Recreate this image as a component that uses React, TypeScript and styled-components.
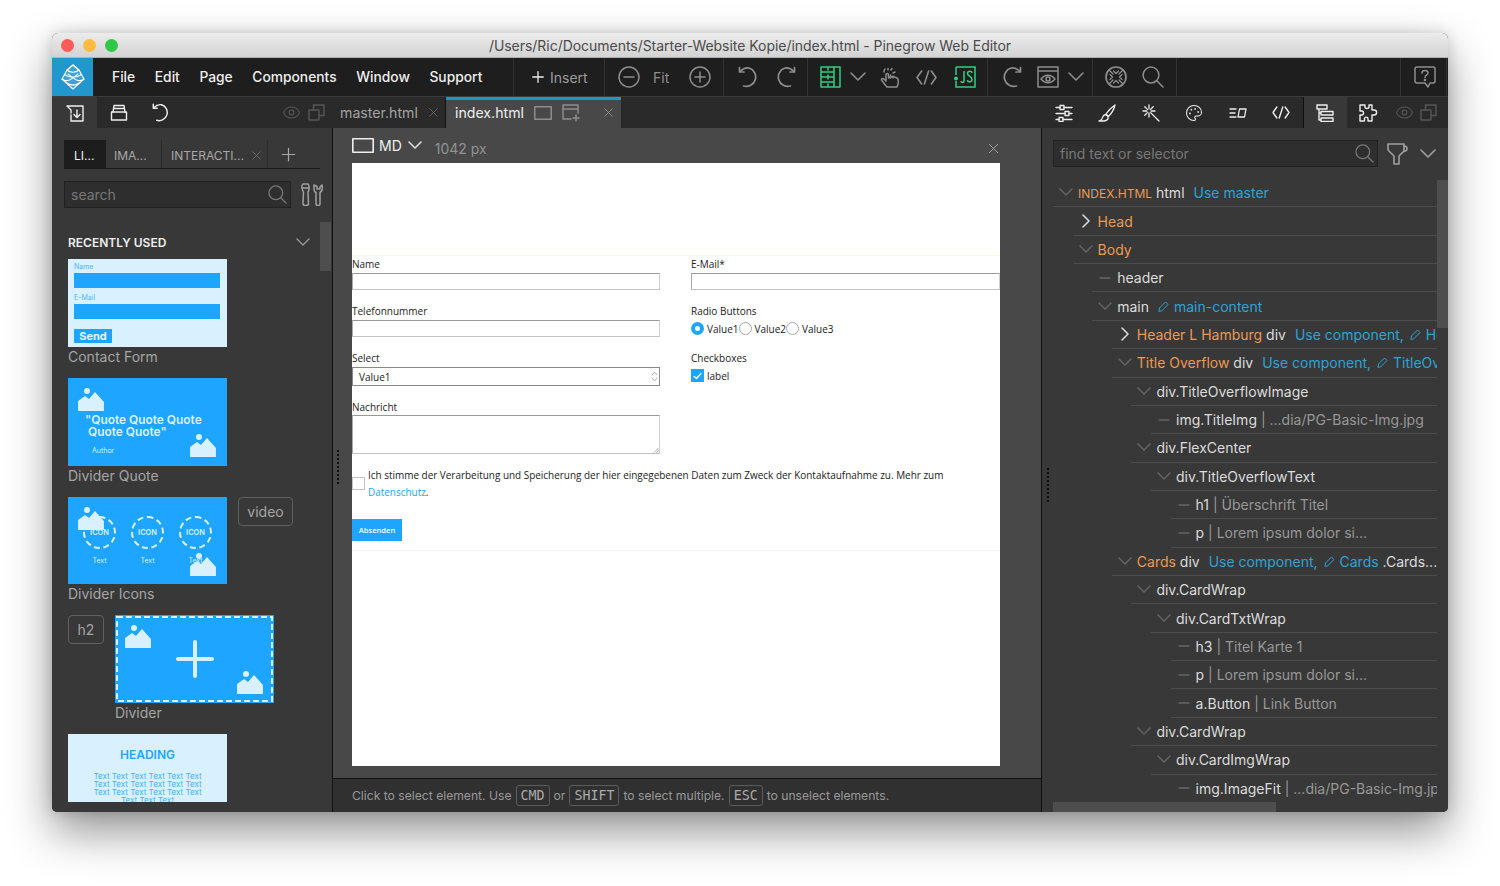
import * as React from 'react';
import styled, { createGlobalStyle } from 'styled-components';
import { Eye, Palette, Plus, X } from 'lucide-react';

const GlobalStyle = createGlobalStyle`
  html, body {
    margin: 0;
    height: 886px;
    overflow: hidden;
    background: #fff;
    font-family: Inter, "Liberation Sans", sans-serif;
  }
  * { box-sizing: border-box; }
`;

const Page = styled.div`
  width: 1500px;
  height: 886px;
  padding: 33px 52px 74px;
`;

const Window = styled.div`
  width: 1396px;
  height: 779px;
  border-radius: 6px 6px 5px 5px;
  overflow: hidden;
  display: flex;
  flex-direction: column;
  background: #383838;
  box-shadow: 0 20px 45px rgba(0, 0, 0, 0.42), 0 0 14px rgba(0, 0, 0, 0.16);
`;

const TitleBar = styled.div`
  height: 25px;
  flex: none;
  position: relative;
  display: flex;
  align-items: center;
  justify-content: center;
  padding-top: 1px;
  background: linear-gradient(#ececec, #d3d3d3);
  border-bottom: 1px solid #b2b2b2;
  color: #4b4b4b;
  font-size: 14px;
  letter-spacing: -0.035px;
`;

const Lights = styled.div`
  position: absolute;
  left: 9px;
  top: 6px;
  display: flex;
  gap: 9px;
`;

const Light = styled.span<{ $color: string }>`
  width: 13px;
  height: 13px;
  border-radius: 50%;
  background: ${(p) => p.$color};
`;

const Toolbar = styled.div`
  height: 39px;
  flex: none;
  display: flex;
  background: #1e1e1e;
  border-bottom: 1px solid #3c3c3c;
`;

const LogoBox = styled.div`
  width: 41px;
  display: flex;
  align-items: center;
  justify-content: center;
  background: #2197cd;
`;

const Menu = styled.div`
  width: 421px;
  padding-left: 19px;
  display: flex;
  align-items: center;
  gap: 19.6px;
  color: #eee;
  font-size: 13.8px;
  font-weight: 500;
  border-right: 1px solid #333;
`;

const ToolGroup = styled.div<{ $width: number; $pad?: number }>`
  width: ${(p) => p.$width}px;
  flex: none;
  display: flex;
  align-items: center;
  padding-left: ${(p) => p.$pad || 0}px;
  border-right: 1px solid #333;
  color: #8d8d8d;
  font-size: 14px;
`;

const InsertLabel = styled.span`
  margin-left: 3px;
  color: #9c9c9c;
`;

const FitLabel = styled.span`
  margin: 0 20px 0 13px;
`;

const TabBar = styled.div`
  height: 31px;
  flex: none;
  display: flex;
  background: #2a2a2a;
`;

const TabIconBox = styled.div<{ $width: number; $active?: boolean }>`
  width: ${(p) => p.$width}px;
  flex: none;
  display: flex;
  align-items: center;
  justify-content: center;
  background: ${(p) => (p.$active ? '#383838' : 'transparent')};
`;

const FileTabs = styled.div`
  flex: 1;
  display: flex;
  align-items: center;
`;

const GhostIcons = styled.div`
  width: 45px;
  flex: none;
  margin-left: 99px;
  display: flex;
  align-items: center;
  gap: 7px;
`;

const FileTab = styled.div<{ $active?: boolean }>`
  height: 31px;
  display: flex;
  align-items: center;
  font-size: 14.15px;
  color: ${(p) => (p.$active ? '#eee' : '#a3a3a3')};
  background: ${(p) => (p.$active ? '#484848' : 'transparent')};
  border-top: ${(p) => (p.$active ? '3px solid #1c96cf' : '0')};
  padding: ${(p) => (p.$active ? '0 0 3px 9px' : '0 0 0 13px')};
  width: ${(p) => (p.$active ? '175px' : '119px')};
  border-right: ${(p) => (p.$active ? '0' : '1px solid #111')};
`;

const Spacer = styled.span<{ $width: number }>`
  width: ${(p) => p.$width}px;
  flex: none;
`;

const RightTabs = styled.div`
  display: flex;
`;

const RightTabIcon = styled(TabIconBox)<{ $split?: boolean }>`
  width: 43.5px;
  border-left: ${(p) => (p.$split ? '1px solid #111' : '0')};
`;

const Body = styled.div`
  flex: 1;
  min-height: 0;
  display: flex;
`;

const LeftPanel = styled.div`
  width: 280px;
  flex: none;
  position: relative;
  display: flex;
  flex-direction: column;
  background: #383838;
  padding-top: 12px;
`;

const LibTabs = styled.div`
  height: 29px;
  margin: 0 12px;
  display: flex;
  align-items: stretch;
  border-bottom: 1px solid #1c1c1c;
  color: #a8a8a8;
  font-size: 12px;
`;

const LibTab = styled.div<{ $width: number; $active?: boolean; $pad?: number }>`
  width: ${(p) => p.$width}px;
  flex: none;
  display: flex;
  align-items: center;
  justify-content: space-between;
  padding: 3px 3px 0 ${(p) => p.$pad ?? 8}px;
  color: ${(p) => (p.$active ? '#eee' : '#a8a8a8')};
  background: ${(p) => (p.$active ? '#1d1d1d' : 'transparent')};
  border-right: ${(p) => (p.$active ? '0' : '1px solid #2b2b2b')};
`;

const AddTab = styled.div`
  width: 40px;
  display: flex;
  align-items: center;
  justify-content: center;
  color: #a8a8a8;
`;

const SearchRow = styled.div`
  margin: 12px 9px 0 12px;
  display: flex;
  align-items: center;
  gap: 9px;
`;

const SearchBox = styled.div<{ $width: number }>`
  width: ${(p) => p.$width}px;
  flex: none;
  height: 27px;
  display: flex;
  align-items: center;
  justify-content: space-between;
  padding: 0 3px 0 6px;
  background: #2e2e2e;
  border: 1px solid #222;
  color: #787878;
  font-size: 14px;
`;

const SectionHead = styled.div`
  margin: 26px 22px 0 16px;
  height: 16px;
  display: flex;
  align-items: center;
  justify-content: space-between;
  color: #eee;
  font-size: 12px;
  font-weight: 600;
`;

const ThumbList = styled.div`
  margin-top: 9px;
  padding-left: 16px;
  height: 543px;
  overflow: hidden;
`;

const ThumbBlock = styled.div`
  margin-bottom: 11px;
  display: flex;
  gap: 11px;
  align-items: flex-start;
`;

const ThumbCol = styled.div`
  width: 159px;
`;

const Thumb = styled.div<{ $light?: boolean; $height?: number }>`
  position: relative;
  width: 159px;
  height: ${(p) => p.$height || 88}px;
  overflow: hidden;
  color: ${(p) => (p.$light ? '#1da5ff' : '#d9f1ff')};
  background: ${(p) => (p.$light ? '#d9f1ff' : '#1da5ff')};
`;

const ThumbLabel = styled.div`
  height: 20px;
  line-height: 20px;
  color: #a5a5a5;
  font-size: 14px;
  white-space: nowrap;
`;

const Tag = styled.div<{ $width: number }>`
  width: ${(p) => p.$width}px;
  flex: none;
  height: 29px;
  display: flex;
  align-items: center;
  justify-content: center;
  border: 1px solid #5f5f5f;
  border-radius: 4px;
  color: #a5a5a5;
  font-size: 14px;
`;

const ContactThumb = styled.div`
  display: flex;
  flex-direction: column;
  padding: 4px 7px 4px 6px;
  font-size: 7px;
  color: #4db8ff;
`;

const ContactLabel = styled.div`
  height: 10px;
  line-height: 8px;
`;

const ContactBar = styled.div`
  height: 15px;
  margin-bottom: 6px;
  background: #1da5ff;
`;

const ContactSend = styled.div`
  width: 38px;
  height: 14px;
  margin-top: 4px;
  background: #1da5ff;
  color: #e8f6ff;
  text-align: center;
  font-size: 11px;
  line-height: 14px;
  font-weight: 700;
`;

const QuoteThumb = styled.div`
  padding: 36px 0 0 17px;
`;

const QuoteText = styled.div`
  font-size: 11.9px;
  line-height: 11.5px;
  font-weight: 600;
  white-space: pre;
`;

const QuoteAuthor = styled.div`
  margin: 9px 0 0 7px;
  font-size: 7px;
`;

const IconsThumb = styled.div`
  position: relative;
  padding-top: 19px;
  display: flex;
  justify-content: center;
  gap: 15px;
`;

const IconCol = styled.div`
  width: 33px;
  display: flex;
  flex-direction: column;
  align-items: center;
  font-size: 7px;
  gap: 7px;
`;

const IconCircle = styled.div`
  width: 33px;
  height: 33px;
  border: 2px dashed #d9f1ff;
  border-radius: 50%;
  display: flex;
  align-items: center;
  justify-content: center;
  font-size: 7.4px;
  font-weight: 600;
`;

const Corner = styled.span<{ $corner: 'tl' | 'br'; $dx?: number; $dy?: number }>`
  position: absolute;
  line-height: 0;
  ${(p) =>
    p.$corner === 'tl'
      ? `left: ${p.$dx ?? 10}px; top: ${p.$dy ?? 9}px;`
      : `right: ${p.$dx ?? 11}px; bottom: ${p.$dy ?? 9}px;`}
`;

const DashFrame = styled.svg`
  position: absolute;
  inset: 0;
`;

const PlusMark = styled.div`
  position: relative;
  height: 100%;
  display: flex;
  align-items: center;
  justify-content: center;
`;

const HeadingThumb = styled.div`
  padding-top: 15px;
  text-align: center;
  color: #3fb3ff;
  font-size: 8px;
  line-height: 8px;
`;

const HeadingTitle = styled.div`
  margin-bottom: 11px;
  color: #1da5ff;
  font-size: 12px;
  line-height: 12px;
  font-weight: 600;
`;

const ScrollV = styled.div<{ $top: number; $height: number }>`
  position: absolute;
  right: 0;
  top: ${(p) => p.$top}px;
  width: 11px;
  height: ${(p) => p.$height}px;
  background: #4e4e4e;
`;

const LeftScrollV = styled(ScrollV)`
  right: 1px;
`;

const Center = styled.div`
  flex: 1;
  min-width: 0;
  position: relative;
  display: flex;
  flex-direction: column;
  background: #484848;
  border-left: 1px solid #111;
  border-right: 1px solid #111;
`;

const DragDots = styled.div<{ $left: number; $top: number }>`
  position: absolute;
  top: ${(p) => p.$top}px;
  left: ${(p) => p.$left}px;
  width: 2px;
  height: 35px;
  background: repeating-linear-gradient(#0d0d0d 0 2px, transparent 2px 4px);
`;

const ViewHead = styled.div`
  height: 35px;
  flex: none;
  display: flex;
  align-items: center;
  padding: 0 39px 0 19px;
  color: #eee;
  font-size: 14px;
`;

const ViewSize = styled.span`
  margin-left: 13px;
  padding-top: 5px;
  color: #929292;
`;

const MdLabel = styled.span`
  margin: 0 6px 0 5px;
`;

const ViewClose = styled.span`
  margin-left: auto;
  line-height: 0;
  padding-top: 5px;
`;

const Canvas = styled.div`
  width: 648px;
  height: 603px;
  margin-left: 19px;
  flex: none;
  background: #fff;
  color: #222;
  font-family: "Open Sans", sans-serif;
  font-size: 10px;
  overflow: hidden;
`;

const Hero = styled.div`
  height: 93px;
  border-bottom: 1px solid #fbf6e8;
`;

const FormGrid = styled.div`
  padding-top: 1px;
  display: grid;
  grid-template-columns: 308px 309px;
  column-gap: 31px;
`;

const FormCol = styled.div`
  display: flex;
  flex-direction: column;
`;

const Field = styled.div`
  margin-bottom: 14px;
`;

const FieldLabel = styled.div`
  height: 16px;
  line-height: 14px;
`;

const TextInput = styled.div`
  height: 17px;
  border: 1px solid #a9a9a9;
  border-right-color: #d0d0d0;
  border-bottom-color: #c4c4c4;
  border-top-color: #999;
`;

const TextArea = styled(TextInput)`
  position: relative;
  height: 39px;
  margin-top: -1px;
`;

const ResizeGrip = styled.span`
  position: absolute;
  right: 0;
  bottom: 0;
  line-height: 0;
`;

const SelectBox = styled.div`
  height: 19px;
  padding: 0 1.5px 0 6px;
  display: flex;
  align-items: center;
  justify-content: space-between;
  border: 1px solid #888;
`;

const Inline = styled.div`
  height: 17px;
  display: flex;
  align-items: center;
`;

const Radio = styled.span<{ $on?: boolean }>`
  width: 13px;
  height: 13px;
  flex: none;
  margin-right: 3px;
  border-radius: 50%;
  background: #fff;
  border: ${(p) => (p.$on ? '4px solid #1da5ff' : '1px solid #aaa')};
`;

const CheckBox = styled.span<{ $on?: boolean }>`
  width: 13px;
  height: 13px;
  flex: none;
  margin-right: 3px;
  display: flex;
  align-items: center;
  justify-content: center;
  background: ${(p) => (p.$on ? '#1da5ff' : '#fff')};
  border: 1px solid ${(p) => (p.$on ? '#1da5ff' : '#c4c4c4')};
`;

const Consent = styled.div`
  margin-top: -1px;
  display: flex;
  gap: 3px;
  font-size: 9.95px;
  line-height: 17px;
`;

const ConsentCheck = styled(CheckBox)`
  margin: 10px 0 0;
`;

const ConsentLink = styled.span`
  color: #1da5ff;
`;

const SubmitButton = styled.div`
  width: 50px;
  height: 22px;
  margin-top: 18px;
  display: flex;
  align-items: center;
  justify-content: center;
  background: #1da5ff;
  color: #fff;
  font-size: 7.6px;
  font-weight: 600;
`;

const CanvasRule = styled.div`
  margin-top: 9px;
  border-top: 1px solid #f1f1f1;
`;

const Status = styled.div`
  margin-top: 12px;
  height: 34px;
  display: flex;
  align-items: center;
  gap: 4px;
  padding-left: 19px;
  background: #303030;
  border-top: 1px solid #111;
  color: #999;
  font-size: 12.15px;
`;

const Key = styled.span`
  height: 21px;
  display: flex;
  align-items: center;
  padding: 0 4px;
  border: 1px solid #5c5c5c;
  border-radius: 3px;
  color: #aaa;
  font-family: "DejaVu Sans Mono", monospace;
  font-size: 13.3px;
`;

const RightPanel = styled.div`
  width: 406px;
  flex: none;
  position: relative;
  padding: 12px 11px 0;
  background: #383838;
`;

const RightSearch = styled.div`
  display: flex;
  align-items: center;
  height: 27px;
`;

const Tree = styled.div`
  width: 384px;
  height: 623px;
  margin-top: 12px;
  overflow: hidden;
`;

const TreeRow = styled.div<{ $level: number }>`
  height: 28.36px;
  margin-left: ${(p) => p.$level * 19.6}px;
  display: flex;
  align-items: center;
  white-space: nowrap;
  font-size: 14px;
  border-bottom: 1px solid #4c4c4c;
`;

const Toggle = styled.span`
  width: 25px;
  flex: none;
  display: flex;
  align-items: center;
  justify-content: center;
  padding-left: 1px;
`;

const partColors: Record<string, string> = {
  orange: '#ea9a53',
  blue: '#2fa2d6',
  white: '#dcdcdc',
  grey: '#979797',
};

const Part = styled.span<{ $kind: string }>`
  color: ${(p) => partColors[p.$kind]};
`;

const SmallCaps = styled.span`
  color: #ea9a53;
  font-size: 12px;
  padding-top: 1px;
`;

const PartGap = styled.span`
  width: 9px;
  flex: none;
`;

const PencilWrap = styled.span<{ $wide?: boolean }>`
  margin: 0 5px 0 ${(p) => (p.$wide ? '9px' : '6px')};
  line-height: 0;
`;

const ScrollH = styled.div`
  position: absolute;
  left: 11px;
  bottom: 0;
  width: 223px;
  height: 10px;
  background: #4e4e4e;
`;

const Svg = ({
  w,
  h = w,
  color = '#8d8d8d',
  sw = 1.5,
  children,
}: {
  w: number;
  h?: number;
  color?: string;
  sw?: number;
  children: React.ReactNode;
}) => (
  <svg
    width={w}
    height={h}
    viewBox={`0 0 ${w} ${h}`}
    fill="none"
    stroke={color}
    strokeWidth={sw}
    strokeLinecap="round"
    strokeLinejoin="round"
    style={{ flex: 'none', display: 'block' }}
  >
    {children}
  </svg>
);

const PineLogo = () => (
  <Svg w={24} h={26} color="#fff" sw={1.1}>
    <path d="M12 1 L18 6 L23 15 L12 25 L1 15 L6 6 Z" fill="rgba(255,255,255,.12)" />
    <path d="M6 6 C9 9 15 9 18 6 M3.5 10.5 C8 14 16 14 20.5 10.5 M1 15 C6 19.5 12 14 17 10 M23 15 C18 19.5 12 14 7 10 M5 18.5 C9 22 15 22 19 18.5 M12 1 C9 3 8 5 6 6 M12 1 C15 3 16 5 18 6" />
  </Svg>
);

const Mountain = ({ width = 26, color = '#d9f1ff' }: { width?: number; color?: string }) => (
  <svg width={width} height={width * 0.92} viewBox="0 0 26 24" style={{ display: 'block' }}>
    <circle cx="9" cy="4" r="3" fill={color} />
    <path d="M0 24 V14 L7 9 L11 12 L17 5 L26 15 V24 Z" fill={color} />
  </svg>
);

const Undo = ({ flip, size = 22, color = '#8d8d8d' }: { flip?: boolean; size?: number; color?: string }) => (
  <svg
    width={size}
    height={size}
    viewBox="0 0 22 22"
    fill="none"
    stroke={color}
    strokeWidth="1.7"
    strokeLinecap="round"
    strokeLinejoin="round"
    style={{ flex: 'none', display: 'block', transform: flip ? 'scaleX(-1)' : undefined }}
  >
    <path d="M1.5 1.5 V6 H6" />
    <path d="M2 5.5 C5 2.5 8 1.5 11 2 A9.3 9.3 0 1 1 5.5 20" />
  </svg>
);

const Chevron = ({ w = 16, color = '#8d8d8d', sw = 1.6 }: { w?: number; color?: string; sw?: number }) => (
  <Svg w={w} h={w / 2 + 2} color={color} sw={sw}>
    <path d={`M1 1 L${w / 2} ${w / 2} L${w - 1} 1`} />
  </Svg>
);

const ChevronSide = () => (
  <Svg w={8} h={14} color="#ddd" sw={1.5}>
    <path d="M1 1 L7 7 L1 13" />
  </Svg>
);

const SearchIcon = ({ size = 22, color = '#8d8d8d', sw = 1.5 }: { size?: number; color?: string; sw?: number }) => (
  <Svg w={size} h={size} color={color} sw={sw}>
    <circle cx={size * 0.41} cy={size * 0.41} r={size * 0.36} />
    <path d={`M${size * 0.67} ${size * 0.67} L${size - 1} ${size - 1}`} />
  </Svg>
);

const CodeIcon = ({ w, h, color = '#8d8d8d', sw = 1.6 }: { w: number; h: number; color?: string; sw?: number }) => (
  <Svg w={w} h={h} color={color} sw={sw}>
    <path
      d={`M${w * 0.27} 1 L1 ${h / 2} L${w * 0.27} ${h - 1} M${w * 0.73} 1 L${w - 1} ${h / 2} L${w * 0.73} ${h - 1} M${w * 0.6} 1 L${w * 0.4} ${h - 1}`}
    />
  </Svg>
);

const ImportIcon = () => (
  <Svg w={18} h={18} color="#eee" sw={1.4}>
    <path d="M1 2 H17 V17 H5 V11 M1 2 L5 6 V9" />
    <path d="M11 6 V13 M8 10.5 L11 13.5 L14 10.5" />
  </Svg>
);

const BoxIcon = () => (
  <Svg w={18} h={17} color="#eee" sw={1.4}>
    <path d="M1.5 8 H16.5 V16 H1.5 Z" />
    <path d="M3 8 L4 1.5 H14 L15 8 M3.5 4.5 H14.5" />
  </Svg>
);

const Copies = ({ color = '#555' }: { color?: string }) => (
  <Svg w={17} h={17} color={color} sw={1.5}>
    <path d="M1 6 H11 V16 H1 Z" />
    <path d="M5.5 6 V1 H16 V11.5 H11" />
  </Svg>
);

const GhostEye = () => <Eye size={19} color="#555" strokeWidth={1.4} />;

const ScreenIcon = ({ w, h, color = '#8d8d8d', sw = 1.5 }: { w: number; h: number; color?: string; sw?: number }) => (
  <Svg w={w} h={h} color={color} sw={sw}>
    <rect x={sw / 2} y={sw / 2} width={w - sw} height={h - sw} />
  </Svg>
);

const NewWindow = () => (
  <Svg w={18} h={18} color="#8d8d8d" sw={1.5}>
    <path d="M16 9 V1 H1 V15 H9 M1 5 H16" />
    <path d="M14 11 V17 M11 14 H17" />
  </Svg>
);

const CircleSign = ({ plus }: { plus?: boolean }) => (
  <Svg w={22} h={22}>
    <circle cx="11" cy="11" r="10" />
    <path d={plus ? 'M6 11 H16 M11 6 V16' : 'M6 11 H16'} />
  </Svg>
);

const LayoutGreen = () => (
  <Svg w={21} h={22} color="#2fd07f" sw={1.5}>
    <path d="M1 1 H20 V21 H1 Z M14 1 V21 M1 6 H14 M1 11 H14 M1 16 H14 M8 1 V4 M8 9 V13 M8 18 V21" />
  </Svg>
);

const HandIcon = () => (
  <Svg w={20} h={21}>
    <path d="M7 20 C5 18 3 15 1.5 13 C1 11.5 3 11 4.5 12.5 L6 14 V7.5 C6 6 8.5 6 8.5 7.5 V11 C11 9.5 15 10 17 11 C19 12 18.5 17 17 20 Z" />
    <path d="M4 5 A3.5 3.5 0 0 1 5 2 M8 1.5 V3 M11 3 L12 1.5 M13 6 L15 5 M10.5 8 V11 M13 9 V11" />
  </Svg>
);

const JsIcon = () => (
  <svg width="22" height="22" viewBox="0 0 22 22" fill="none" stroke="#2fd07f" strokeWidth="1.5" style={{ flex: 'none', display: 'block' }}>
    <path d="M2 1 H21 V21 H2 V15 M2 9 V1" />
    <circle cx="2" cy="12.5" r="2" fill="#2fd07f" stroke="none" />
    <path d="M10 5 V15 C10 17 7 17 7 15 M18 7 C18 4.5 13.5 4.5 13.5 7.5 C13.5 10.5 18 10 18 13.5 C18 16.5 13.5 16.5 13.5 14" />
  </svg>
);

const EyeWindow = () => (
  <Svg w={22} h={22}>
    <path d="M1 1 H21 V21 H1 Z M1 5 H21" />
    <path d="M4 13 C8 8 14 8 18 13 C14 18 8 18 4 13 Z" />
    <circle cx="11" cy="13" r="2" />
  </Svg>
);

const WheelIcon = () => (
  <Svg w={22} h={22} sw={1.7}>
    <circle cx="11" cy="11" r="10" />
    <g strokeWidth="1.3">
      <path d="M4.5 4.5 L8 8 M17.5 4.5 L14 8 M4.5 17.5 L8 14 M17.5 17.5 L14 14" />
      <path d="M8.5 5 L11 7.5 L13.5 5 M8.5 17 L11 14.5 L13.5 17 M5 8.5 L7.5 11 L5 13.5 M17 8.5 L14.5 11 L17 13.5" />
    </g>
  </Svg>
);

const HelpIcon = () => (
  <svg width="22" height="22" viewBox="0 0 22 22" fill="none" stroke="#8d8d8d" strokeWidth="1.5" strokeLinejoin="round" style={{ flex: 'none', display: 'block' }}>
    <path d="M3 1 H19 A2 2 0 0 1 21 3 V15 A2 2 0 0 1 19 17 H16 L14 21 L11 17 H3 A2 2 0 0 1 1 15 V3 A2 2 0 0 1 3 1 Z" />
    <path d="M8 7 C8 3.5 14 3.5 14 7 C14 9 11 9 11 11.5" strokeLinecap="round" />
    <circle cx="11" cy="14" r="0.6" fill="#8d8d8d" />
  </svg>
);

const SlidersIcon = () => (
  <Svg w={18} h={18} color="#eee" sw={1.3}>
    <path d="M1 3.5 H5 M9 3.5 H17 M1 9.5 H10 M14 9.5 H17 M1 15.5 H4 M8 15.5 H17" />
    <rect x="5" y="1.5" width="4" height="4" />
    <rect x="10" y="7.5" width="4" height="4" />
    <rect x="4" y="13.5" width="4" height="4" />
  </Svg>
);

const BrushIcon = () => (
  <Svg w={18} h={18} color="#eee" sw={1.3}>
    <path d="M17 1 C14 3 10 7 8 10 L10.5 12.5 C13 10 16 5 17 1 Z" />
    <path d="M7.5 10.5 C4 11 5.5 14 3 16 C2 17 1 17 1 17 H5 C8 17 11 15.5 10 12.5 Z" />
  </Svg>
);

const WandIcon = () => (
  <Svg w={18} h={18} color="#eee" sw={1.3}>
    <path d="M7 1 V5 M7 9 V13 M1 7 H5 M9 7 H13 M2.8 2.8 L5.4 5.4 M8.6 8.6 L17 17 M11.2 2.8 L8.6 5.4 M2.8 11.2 L5.4 8.6" />
  </Svg>
);

const TreeIcon = () => (
  <Svg w={18} h={18} color="#eee" sw={1.4}>
    <path d="M1 1 H11 V5 H1 Z M5 7.5 H17 V11 H5 Z M5 14 H17 V17.5 H5 Z M3 5 V16 H5 M3 9 H5" />
  </Svg>
);

const PuzzleIcon = () => (
  <Svg w={19} h={18} color="#eee" sw={1.4}>
    <path d="M1 1 H6 V3 C6 5 10 5 10 3 V1 H13 V6 H15 C18.5 6 18.5 11 15 11 H13 V17 H9 V15 C9 12.5 5.5 12.5 5.5 15 V17 H1 V11 H3 C5 11 5 7 3 7 H1 Z" />
  </Svg>
);

const TextBoxIcon = () => (
  <Svg w={18} h={12} color="#eee" sw={1.3}>
    <path d="M1 2 H7 M1 6 H6 M1 10 H7 M10.5 2 H17 L15.5 10 H9 Z" />
  </Svg>
);

const Tools = () => (
  <Svg w={23} h={23} color="#a0a0a0" sw={1.5}>
    <path d="M3 1 H8 C10 3 9 8 8 9 L8.5 21 C8.5 23 3 23 3 21 L3.5 9 C2 7 1 3 3 1 Z M3 5 H8" />
    <path d="M14 2 V6 C14 8 15 9 16 9.5 V21 C16 23 20 23 20 21 V9.5 C22 8.5 23 6 22 2 L20 4 V6 H17 V3.5 Z" />
  </Svg>
);

const FilterCup = () => (
  <Svg w={21} h={22} color="#a0a0a0" sw={1.6}>
    <path d="M1 1 H17 V8 L12 13 V21 H7 V13 L1 7 Z" />
    <path d="M17 3 C21 3 21 8 17 8.5" />
  </Svg>
);

const Pencil = ({ color = '#2fa2d6' }: { color?: string }) => (
  <Svg w={11} h={11} color={color} sw={1}>
    <path d="M1 10 L1.5 7 L7.5 1 L10 3.5 L4 9.5 Z" />
  </Svg>
);

type TreePart = { kind: string; text?: string };
type TreeItem = { level: number; toggle: 'down' | 'right' | 'dash'; parts: TreePart[] };

const u = (t: string) => ({ kind: 'blue', text: t });
const wh = (t: string) => ({ kind: 'white', text: t });
const o = (t: string) => ({ kind: 'orange', text: t });
const g = (t: string) => ({ kind: 'grey', text: t });
const gap = { kind: 'gap' };
const pen = { kind: 'pen' };
const penWide = { kind: 'penWide' };

const treeItems: TreeItem[] = [
  { level: 0, toggle: 'down', parts: [{ kind: 'caps', text: 'INDEX.HTML' }, wh('\u00a0html'), gap, u('Use master')] },
  { level: 1, toggle: 'right', parts: [o('Head')] },
  { level: 1, toggle: 'down', parts: [o('Body')] },
  { level: 2, toggle: 'dash', parts: [wh('header')] },
  { level: 2, toggle: 'down', parts: [wh('main'), penWide, u('main-content')] },
  { level: 3, toggle: 'right', parts: [o('Header L Hamburg'), wh('\u00a0div'), gap, u('Use component,'), pen, u('Header')] },
  { level: 3, toggle: 'down', parts: [o('Title Overflow'), wh('\u00a0div'), gap, u('Use component,'), pen, u('TitleOverflow')] },
  { level: 4, toggle: 'down', parts: [wh('div.TitleOverflowImage')] },
  { level: 5, toggle: 'dash', parts: [wh('img.TitleImg'), g('\u00a0| ...dia/PG-Basic-Img.jpg')] },
  { level: 4, toggle: 'down', parts: [wh('div.FlexCenter')] },
  { level: 5, toggle: 'down', parts: [wh('div.TitleOverflowText')] },
  { level: 6, toggle: 'dash', parts: [wh('h1'), g('\u00a0| Überschrift Titel')] },
  { level: 6, toggle: 'dash', parts: [wh('p'), g('\u00a0| Lorem ipsum dolor si...')] },
  { level: 3, toggle: 'down', parts: [o('Cards'), wh('\u00a0div'), gap, u('Use component,'), pen, u('Cards'), wh('\u00a0.Cards...')] },
  { level: 4, toggle: 'down', parts: [wh('div.CardWrap')] },
  { level: 5, toggle: 'down', parts: [wh('div.CardTxtWrap')] },
  { level: 6, toggle: 'dash', parts: [wh('h3'), g('\u00a0| Titel Karte 1')] },
  { level: 6, toggle: 'dash', parts: [wh('p'), g('\u00a0| Lorem ipsum dolor si...')] },
  { level: 6, toggle: 'dash', parts: [wh('a.Button'), g('\u00a0| Link Button')] },
  { level: 4, toggle: 'down', parts: [wh('div.CardWrap')] },
  { level: 5, toggle: 'down', parts: [wh('div.CardImgWrap')] },
  { level: 6, toggle: 'dash', parts: [wh('img.ImageFit'), g('\u00a0| ...dia/PG-Basic-Img.jpg')] },
];

const TreeToggle = ({ kind }: { kind: TreeItem['toggle'] }) => {
  if (kind === 'right') return <ChevronSide />;
  if (kind === 'down') return <Chevron w={14} color="#666" sw={1.4} />;
  return (
    <Svg w={12} h={4} color="#666" sw={1.3}>
      <path d="M1 2 H11" />
    </Svg>
  );
};

export default function App() {
  return (
    <Page>
      <GlobalStyle />
      <Window>
        <TitleBar>
          <Lights>
            <Light $color="#fc5b57" />
            <Light $color="#fdbc40" />
            <Light $color="#33c748" />
          </Lights>
          /Users/Ric/Documents/Starter-Website Kopie/index.html - Pinegrow Web Editor
        </TitleBar>

        <Toolbar>
          <LogoBox>
            <PineLogo />
          </LogoBox>
          <Menu>
            <span>File</span>
            <span>Edit</span>
            <span>Page</span>
            <span>Components</span>
            <span>Window</span>
            <span>Support</span>
          </Menu>
          <ToolGroup $width={91} $pad={15}>
            <Plus size={18} color="#eee" strokeWidth={1.7} />
            <InsertLabel>Insert</InsertLabel>
          </ToolGroup>
          <ToolGroup $width={119} $pad={13}>
            <CircleSign />
            <FitLabel>Fit</FitLabel>
            <CircleSign plus />
          </ToolGroup>
          <ToolGroup $width={84} $pad={14}>
            <Undo />
            <Spacer $width={14} />
            <Undo flip />
          </ToolGroup>
          <ToolGroup $width={180} $pad={12}>
            <LayoutGreen />
            <Spacer $width={9} />
            <Chevron />
            <Spacer $width={14} />
            <HandIcon />
            <Spacer $width={16} />
            <CodeIcon w={21} h={15} />
            <Spacer $width={17} />
            <JsIcon />
          </ToolGroup>
          <ToolGroup $width={105} $pad={12}>
            <Undo flip />
            <Spacer $width={15} />
            <EyeWindow />
            <Spacer $width={9} />
            <Chevron />
          </ToolGroup>
          <ToolGroup $width={84} $pad={12}>
            <WheelIcon />
            <Spacer $width={15} />
            <SearchIcon />
          </ToolGroup>
          <ToolGroup $width={224} />
          <ToolGroup $width={46} $pad={13}>
            <HelpIcon />
          </ToolGroup>
        </Toolbar>

        <TabBar>
          <TabIconBox $width={45} $active>
            <ImportIcon />
          </TabIconBox>
          <FileTabs>
            <TabIconBox $width={43}>
              <BoxIcon />
            </TabIconBox>
            <TabIconBox $width={43}>
              <Undo size={19} color="#eee" />
            </TabIconBox>
            <GhostIcons>
              <GhostEye />
              <Copies />
            </GhostIcons>
            <FileTab>
              master.html
              <Spacer $width={8} />
              <X size={15} color="#6c6c6c" strokeWidth={1.3} />
            </FileTab>
            <FileTab $active>
              index.html
              <Spacer $width={10} />
              <ScreenIcon w={18} h={14} />
              <Spacer $width={10} />
              <NewWindow />
              <Spacer $width={21} />
              <X size={15} color="#999" strokeWidth={1.3} />
            </FileTab>
          </FileTabs>
          <RightTabs>
            <RightTabIcon $width={44}>
              <SlidersIcon />
            </RightTabIcon>
            <RightTabIcon $width={44}>
              <BrushIcon />
            </RightTabIcon>
            <RightTabIcon $width={44}>
              <WandIcon />
            </RightTabIcon>
            <RightTabIcon $width={44}>
              <Palette size={18} color="#eee" strokeWidth={1.4} />
            </RightTabIcon>
            <RightTabIcon $width={44}>
              <TextBoxIcon />
            </RightTabIcon>
            <RightTabIcon $width={44}>
              <CodeIcon w={18} h={13} color="#eee" sw={1.4} />
            </RightTabIcon>
            <RightTabIcon $width={44} $active $split>
              <TreeIcon />
            </RightTabIcon>
            <RightTabIcon $width={44}>
              <PuzzleIcon />
            </RightTabIcon>
            <TabIconBox $width={58}>
              <GhostEye />
              <Spacer $width={6} />
              <Copies />
              <Spacer $width={6} />
            </TabIconBox>
          </RightTabs>
        </TabBar>

        <Body>
          <LeftPanel>
            <LibTabs>
              <LibTab $width={42} $active $pad={10}>
                LI...
              </LibTab>
              <LibTab $width={56}>IMA...</LibTab>
              <LibTab $width={106} $pad={9}>
                INTERACTI...
                <X size={15} color="#777" strokeWidth={1.2} />
              </LibTab>
              <AddTab>
                <Plus size={21} strokeWidth={1.4} />
              </AddTab>
            </LibTabs>
            <SearchRow>
              <SearchBox $width={227}>
                search
                <SearchIcon size={19} color="#777" sw={1.3} />
              </SearchBox>
              <Tools />
            </SearchRow>
            <SectionHead>
              RECENTLY USED
              <Chevron w={14} color="#999" sw={1.4} />
            </SectionHead>
            <ThumbList>
              <ThumbBlock>
                <ThumbCol>
                  <Thumb $light>
                    <ContactThumb>
                      <ContactLabel>Name</ContactLabel>
                      <ContactBar />
                      <ContactLabel>E-Mail</ContactLabel>
                      <ContactBar />
                      <ContactSend>Send</ContactSend>
                    </ContactThumb>
                  </Thumb>
                  <ThumbLabel>Contact Form</ThumbLabel>
                </ThumbCol>
              </ThumbBlock>
              <ThumbBlock>
                <ThumbCol>
                  <Thumb>
                    <Corner $corner="tl">
                      <Mountain />
                    </Corner>
                    <Corner $corner="br">
                      <Mountain />
                    </Corner>
                    <QuoteThumb>
                      <QuoteText>{'"Quote Quote Quote\n Quote Quote"'}</QuoteText>
                      <QuoteAuthor>Author</QuoteAuthor>
                    </QuoteThumb>
                  </Thumb>
                  <ThumbLabel>Divider Quote</ThumbLabel>
                </ThumbCol>
              </ThumbBlock>
              <ThumbBlock>
                <ThumbCol>
                  <Thumb $height={87}>
                    <Corner $corner="tl">
                      <Mountain />
                    </Corner>
                    <IconsThumb>
                      {[0, 1, 2].map((i) => (
                        <IconCol key={i}>
                          <IconCircle>ICON</IconCircle>
                          Text
                        </IconCol>
                      ))}
                    </IconsThumb>
                    <Corner $corner="br" $dy={8}>
                      <Mountain />
                    </Corner>
                  </Thumb>
                  <ThumbLabel>Divider Icons</ThumbLabel>
                </ThumbCol>
                <Tag $width={55}>video</Tag>
              </ThumbBlock>
              <ThumbBlock>
                <Tag $width={36}>h2</Tag>
                <ThumbCol>
                  <Thumb>
                    <DashFrame width="159" height="88" fill="none" stroke="#d9f1ff" strokeWidth="2" strokeDasharray="6 3">
                      <rect x="2" y="2" width="155" height="84" />
                    </DashFrame>
                    <Corner $corner="tl">
                      <Mountain />
                    </Corner>
                    <Corner $corner="br">
                      <Mountain />
                    </Corner>
                    <PlusMark>
                      <Svg w={38} h={38} color="#d9f1ff" sw={4}>
                        <path d="M2 19 H36 M19 2 V36" />
                      </Svg>
                    </PlusMark>
                  </Thumb>
                  <ThumbLabel>Divider</ThumbLabel>
                </ThumbCol>
              </ThumbBlock>
              <ThumbBlock>
                <Thumb $light $height={68}>
                  <HeadingThumb>
                    <HeadingTitle>HEADING</HeadingTitle>
                    Text Text Text Text Text Text
                    <br />
                    Text Text Text Text Text Text
                    <br />
                    Text Text Text Text Text Text
                    <br />
                    Text Text Text
                  </HeadingThumb>
                </Thumb>
              </ThumbBlock>
            </ThumbList>
            <LeftScrollV $top={94} $height={49} />
          </LeftPanel>

          <Center>
            <DragDots $left={4} $top={322} />
            <ViewHead>
              <ScreenIcon w={22} h={15} color="#eee" sw={1.6} />
              <MdLabel>MD</MdLabel>
              <Chevron w={14} color="#ddd" />
              <ViewSize>1042 px</ViewSize>
              <ViewClose>
                <X size={17} color="#aaa" strokeWidth={1.3} />
              </ViewClose>
            </ViewHead>
            <Canvas>
              <Hero />
              <FormGrid>
                <FormCol>
                  <Field>
                    <FieldLabel>Name</FieldLabel>
                    <TextInput />
                  </Field>
                  <Field>
                    <FieldLabel>Telefonnummer</FieldLabel>
                    <TextInput />
                  </Field>
                  <Field>
                    <FieldLabel>Select</FieldLabel>
                    <SelectBox>
                      Value1
                      <Svg w={7} h={11} color="#aaa" sw={0.9}>
                        <path d="M1 4 L3.5 1 L6 4 M1 7 L3.5 10 L6 7" />
                      </Svg>
                    </SelectBox>
                  </Field>
                  <Field>
                    <FieldLabel>Nachricht</FieldLabel>
                    <TextArea>
                      <ResizeGrip>
                        <Svg w={6} h={6} color="#999" sw={0.7}>
                          <path d="M1 5.5 L5.5 1 M3.5 5.5 L5.5 3.5" />
                        </Svg>
                      </ResizeGrip>
                    </TextArea>
                  </Field>
                </FormCol>
                <FormCol>
                  <Field>
                    <FieldLabel>E-Mail*</FieldLabel>
                    <TextInput />
                  </Field>
                  <Field>
                    <FieldLabel>Radio Buttons</FieldLabel>
                    <Inline>
                      <Radio $on />
                      Value1
                      <Radio />
                      Value2
                      <Radio />
                      Value3
                    </Inline>
                  </Field>
                  <Field>
                    <FieldLabel>Checkboxes</FieldLabel>
                    <Inline>
                      <CheckBox $on>
                        <Svg w={9} h={8} color="#fff" sw={1.2}>
                          <path d="M1 4.5 L3.5 6.5 L8 1.5" />
                        </Svg>
                      </CheckBox>
                      label
                    </Inline>
                  </Field>
                </FormCol>
              </FormGrid>
              <Consent>
                <ConsentCheck />
                <div>
                  Ich stimme der Verarbeitung und Speicherung der hier eingegebenen Daten zum Zweck der Kontaktaufnahme zu. Mehr zum
                  <br />
                  <ConsentLink>Datenschutz</ConsentLink>.
                </div>
              </Consent>
              <SubmitButton>Absenden</SubmitButton>
              <CanvasRule />
            </Canvas>
            <Status>
              Click to select element. Use <Key>CMD</Key> or <Key>SHIFT</Key> to select multiple. <Key>ESC</Key> to unselect elements.
            </Status>
          </Center>

          <RightPanel>
            <DragDots $left={5} $top={340} />
            <RightSearch>
              <SearchBox $width={325}>
                find text or selector
                <SearchIcon size={19} color="#777" sw={1.3} />
              </SearchBox>
              <Spacer $width={9} />
              <FilterCup />
              <Spacer $width={12} />
              <Chevron color="#a0a0a0" />
            </RightSearch>
            <Tree>
              {treeItems.map((item, i) => (
                <TreeRow key={i} $level={item.level}>
                  <Toggle>
                    <TreeToggle kind={item.toggle} />
                  </Toggle>
                  {item.parts.map((part, j) => {
                    if (part.kind === 'gap') return <PartGap key={j} />;
                    if (part.kind === 'pen' || part.kind === 'penWide')
                      return (
                        <PencilWrap key={j} $wide={part.kind === 'penWide'}>
                          <Pencil />
                        </PencilWrap>
                      );
                    if (part.kind === 'caps') return <SmallCaps key={j}>{part.text}</SmallCaps>;
                    return (
                      <Part key={j} $kind={part.kind}>
                        {part.text}
                      </Part>
                    );
                  })}
                </TreeRow>
              ))}
            </Tree>
            <ScrollV $top={52} $height={148} />
            <ScrollH />
          </RightPanel>
        </Body>
      </Window>
    </Page>
  );
}
